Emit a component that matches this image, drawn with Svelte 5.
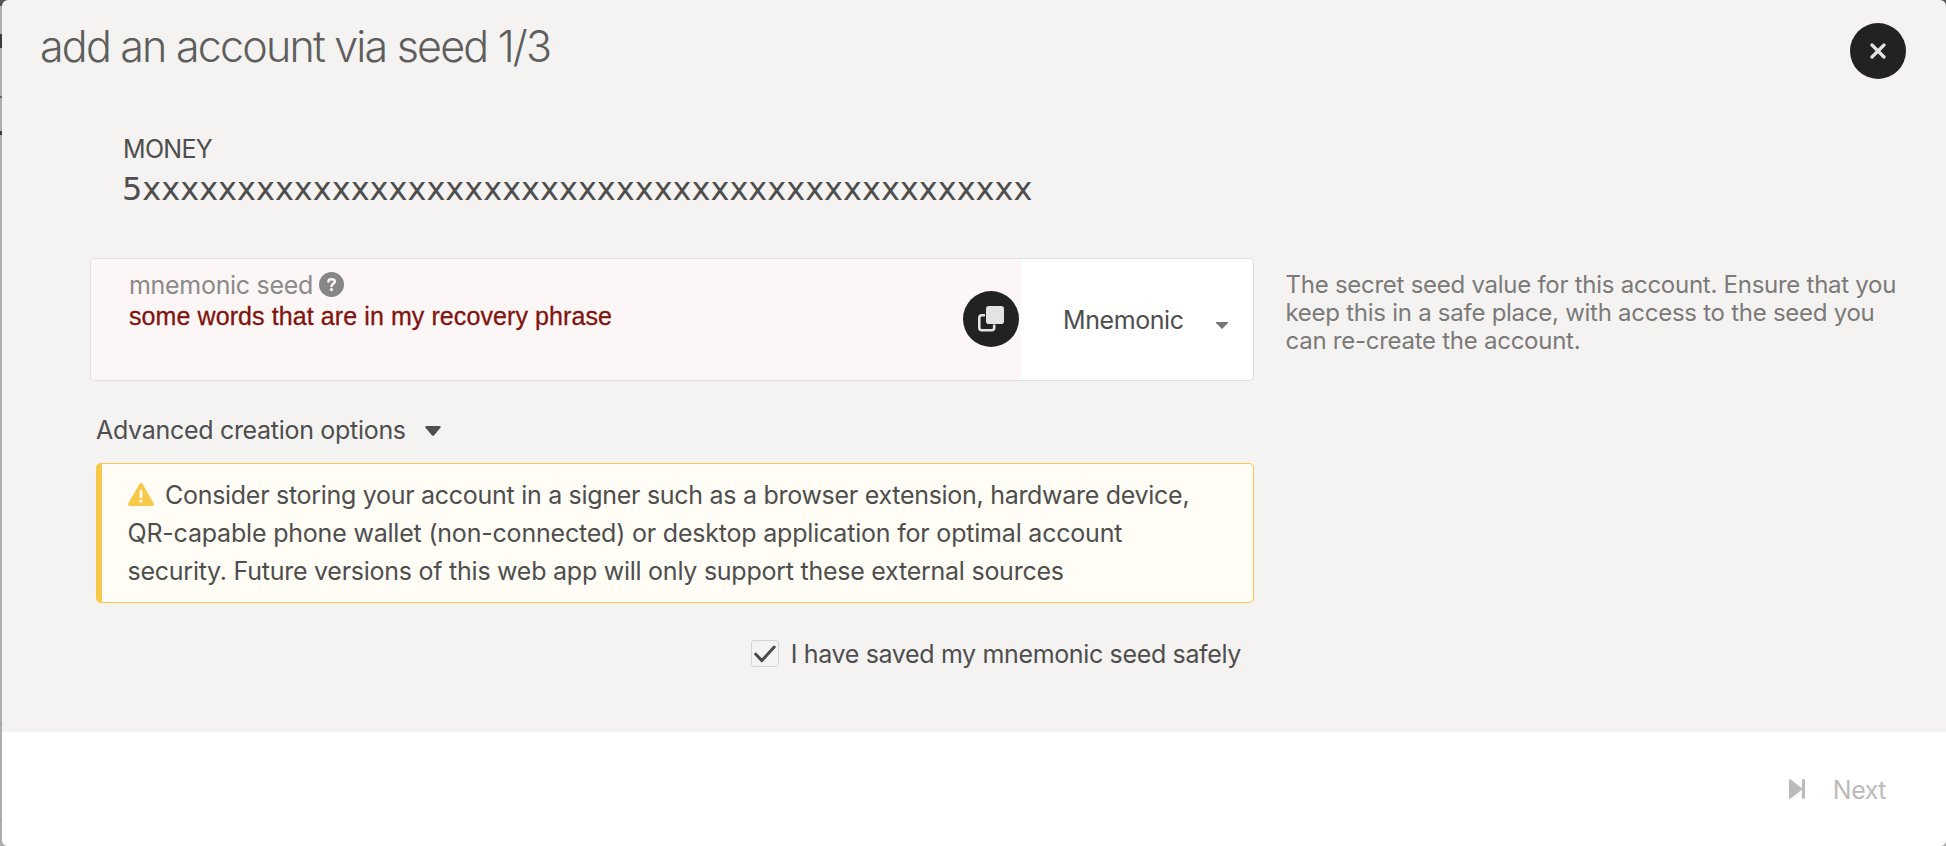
<script>
  let saved = $state(true);
  const address = '5' + 'x'.repeat(47);
  const warning = [
    'Consider storing your account in a signer such as a browser extension, hardware device,',
    'QR-capable phone wallet (non-connected) or desktop application for optimal account',
    'security. Future versions of this web app will only support these external sources'
  ];
  const help = [
    'The secret seed value for this account. Ensure that you',
    'keep this in a safe place, with access to the seed you',
    'can re-create the account.'
  ];
</script>

<div class="backdrop">
  <div class="modal">
    <header>
      <h1>add an account via seed 1/3</h1>
      <button class="round" aria-label="Close">
        <svg width="16" height="16" viewBox="0 0 16 16"><path d="M2 2L14 14M14 2L2 14" stroke="#e3e3e1" stroke-width="3.2" stroke-linecap="round" /></svg>
      </button>
    </header>

    <main>
      <section class="account">
        <div class="name">MONEY</div>
        <div class="address">{address}</div>
      </section>

      <div class="columns">
        <div class="form">
          <div class="field">
            <div class="seed">
              <div class="seed-text">
                <div class="label">
                  <span>mnemonic seed</span>
                  <svg width="25" height="25" viewBox="0 0 25 25"><circle cx="12.5" cy="12.5" r="12.5" fill="#878787" /><path d="M9.4 9.5C9.5 7.9 10.7 7.2 12.5 7.2C14.6 7.2 15.9 8 15.9 9.6C15.9 11.6 12.6 11.7 12.6 14" fill="none" stroke="#fdf6f6" stroke-width="2.5" stroke-linecap="round" /><circle cx="12.5" cy="17.6" r="1.6" fill="#fdf6f6" /></svg>
                </div>
                <div class="value">some words that are in my recovery phrase</div>
              </div>
              <button class="round" aria-label="Copy">
                <svg width="26" height="26" viewBox="0 0 26 26"><path d="M7 9.3H3.8Q1.3 9.3 1.3 11.8V21.7Q1.3 24.2 3.8 24.2H13.7Q16.2 24.2 16.2 21.7V18.5" fill="none" stroke="#e3e3e1" stroke-width="2.6" /><rect x="8" y="0" width="18" height="18" rx="2.8" fill="#e3e3e1" /></svg>
              </button>
            </div>
            <div class="type">
              <span>Mnemonic</span>
              <svg width="12" height="7" viewBox="0 0 12 7"><path d="M0 0H12V1L6 7L0 1Z" fill="#767676" /></svg>
            </div>
          </div>

          <div class="advanced">
            <span>Advanced creation options</span>
            <svg width="16" height="10" viewBox="0 0 16 10"><path d="M1.5 0H14.5Q16 0 15.6 1.5L9.2 9.2Q8 10.4 6.8 9.2L.4 1.5Q0 0 1.5 0Z" fill="#4e4e4e" /></svg>
          </div>

          <div class="warning">
            {#each warning as line, i}
              <div class="line">
                {#if i === 0}
                  <svg width="26" height="23" viewBox="0 0 26 23"><path d="M11.4 1Q13 -1 14.6 1L25.7 20.3Q26.4 22.8 24 23H2Q-.4 22.8 .3 20.3Z" fill="#f8c848" /><path d="M13 8V14" stroke="#fffdf5" stroke-width="2.6" stroke-linecap="round" /><circle cx="13" cy="18" r="1.6" fill="#fffdf5" /></svg>
                {/if}
                <span>{line}</span>
              </div>
            {/each}
          </div>

          <button class="confirm" onclick={() => (saved = !saved)}>
            <span class="check">
              {#if saved}
                <svg width="22" height="18" viewBox="0 0 22 18"><path d="M1.8 9.2L7.9 15.6L20.2 2" fill="none" stroke="#4a4a4a" stroke-width="3" stroke-linecap="round" stroke-linejoin="round" /></svg>
              {/if}
            </span>
            <span>I have saved my mnemonic seed safely</span>
          </button>
        </div>

        <aside>
          {#each help as line}<div>{line}</div>{/each}
        </aside>
      </div>
    </main>

    <footer>
      <button class="next" disabled>
        <svg width="16" height="20" viewBox="0 0 16 20"><path d="M0 1.4Q0 -.5 1.8 .5L12.9 9.2V1Q12.9 .2 13.7 .2H15.2Q16 .2 16 1V19Q16 19.8 15.2 19.8H13.7Q12.9 19.8 12.9 19V10.8L1.8 19.5Q0 20.5 0 18.6Z" fill="#bcbbba" /></svg>
        <span>Next</span>
      </button>
    </footer>
  </div>
</div>

<style>
  :global(body) { margin: 0; }
  .backdrop {
    box-sizing: border-box;
    height: 846px;
    padding-left: 2px;
    background:
      linear-gradient(#3b3b3b, #3b3b3b) 0 34px / 2px 14px no-repeat,
      linear-gradient(#666, #666) 0 96px / 2px 2px no-repeat,
      linear-gradient(#3b3b3b, #3b3b3b) 0 131px / 2px 4px no-repeat,
      linear-gradient(#999, #999) 0 723px / 2px 1px no-repeat,
      linear-gradient(#999, #999) 0 820px / 2px 1px no-repeat,
      linear-gradient(#555 6px, #adadad 6px);
    overflow: hidden;
  }
  .modal {
    display: flex;
    flex-direction: column;
    height: 846px;
    border-radius: 6px;
    background: #f4f3f1;
    overflow: hidden;
    font: 430 25px/30px Inter, sans-serif;
    letter-spacing: -0.3px;
    color: #4e4e4e;
  }
  button {
    border: 0;
    padding: 0;
    background: none;
    font: inherit;
    letter-spacing: inherit;
    color: inherit;
  }
  svg { flex: none; display: block; }
  header {
    display: flex;
    justify-content: space-between;
    align-items: flex-start;
    height: 134px;
    box-sizing: border-box;
    padding: 20px 40px 0 38px;
  }
  h1 {
    margin: 0;
    font-size: 43px;
    line-height: 52px;
    font-weight: 300;
    letter-spacing: -1.8px;
    color: #5e5e5d;
  }
  .round {
    display: flex;
    align-items: center;
    justify-content: center;
    flex: none;
    width: 56px;
    height: 56px;
    border-radius: 50%;
    background: #222;
  }
  header .round { margin-top: 3px; }
  main { flex: 1; padding-left: 88px; }
  .account { padding-left: 32px; height: 124px; }
  .name { padding-left: 1px; letter-spacing: -0.7px; }
  .address {
    margin-top: 5px;
    font: 32px/40px "DejaVu Sans", sans-serif;
    letter-spacing: 0;
  }
  .columns { display: flex; }
  .form { width: 1164px; }
  .field {
    display: flex;
    box-sizing: border-box;
    height: 123px;
    border: 1px solid #dcdfea;
    border-radius: 5px;
    background: #fff;
    overflow: hidden;
  }
  .seed {
    display: flex;
    justify-content: space-between;
    align-items: center;
    box-sizing: border-box;
    width: 930px;
    padding: 0 2px 1px 38px;
    background: #fdf6f6;
  }
  .seed-text { align-self: flex-start; padding-top: 11px; }
  .label {
    display: flex;
    align-items: center;
    gap: 6px;
    color: #8b8a89;
  }
  .label svg { margin-top: -2px; }
  .value {
    margin-top: 1px;
    font-family: "Liberation Sans", sans-serif;
    letter-spacing: 0.09px;
    color: #7f140e;
    -webkit-text-stroke: 0.3px #7f140e;
  }
  .type {
    display: flex;
    align-items: center;
    justify-content: space-between;
    flex: 1;
    padding: 0 25px 0 42px;
  }
  .type span { letter-spacing: -0.42px; }
  .type svg { margin-top: 11px; }
  .advanced {
    display: flex;
    align-items: center;
    gap: 19px;
    padding-left: 6px;
    margin-top: 34px;
  }
  .advanced svg { margin-top: 2px; }
  .warning {
    margin: 18px 0 0 6px;
    padding: 12px 0 12px 25.5px;
    border: 1px solid #f8c848;
    border-left-width: 6px;
    border-radius: 5px;
    background: #fffdf5;
    line-height: 38px;
    letter-spacing: -0.25px;
    white-space: nowrap;
  }
  .line { display: flex; align-items: center; }
  .line:first-child { letter-spacing: -0.29px; }
  .line:nth-child(2) { letter-spacing: -0.2px; }
  .line svg { margin-right: 11.5px; margin-top: -2px; }
  .confirm {
    display: flex;
    align-items: center;
    gap: 12px;
    margin: 36px 13px 0 auto;
    letter-spacing: -0.35px;
    white-space: nowrap;
  }
  .check {
    display: flex;
    align-items: center;
    justify-content: center;
    box-sizing: border-box;
    width: 28px;
    height: 27px;
    margin-top: -1px;
    border: 1px solid #d5d4d2;
    border-radius: 3px;
  }
  aside {
    padding: 13px 0 0 31.5px;
    font-size: 24px;
    line-height: 28px;
    letter-spacing: -0.262px;
    white-space: nowrap;
    color: #7b7a79;
  }
  footer {
    display: flex;
    justify-content: flex-end;
    align-items: center;
    box-sizing: border-box;
    height: 114px;
    padding: 2px 60px 0 0;
    background: #fff;
  }
  .next {
    display: flex;
    align-items: center;
    gap: 28px;
    letter-spacing: -0.5px;
    color: #bcbbba;
  }
  .next svg { margin-top: -2px; }
</style>
